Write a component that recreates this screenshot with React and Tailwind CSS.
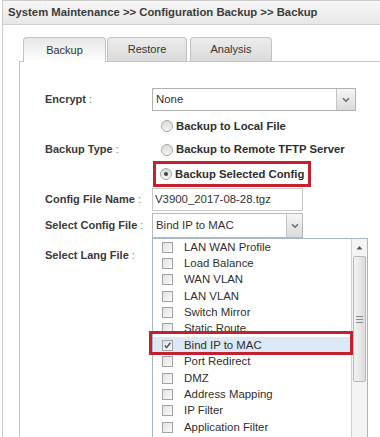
const langItems = [
  'LAN WAN Profile',
  'Load Balance',
  'WAN VLAN',
  'LAN VLAN',
  'Switch Mirror',
  'Static Route',
  'Bind IP to MAC',
  'Port Redirect',
  'DMZ',
  'Address Mapping',
  'IP Filter',
  'Application Filter',
]

function Chevron() {
  return (
    <svg width="8" height="6" viewBox="0 0 8 6">
      <path d="M1 1.2 L4 4.2 L7 1.2" fill="none" stroke="#6b6b6b" strokeWidth="1.6" />
    </svg>
  )
}

function DropButton({ w }) {
  return (
    <div className={`${w} h-full flex items-center justify-center border-l border-[#c4c4c4] bg-gradient-to-b from-[#f6f6f6] to-[#dadada]`}>
      <Chevron />
    </div>
  )
}

function Label({ name, className = '' }) {
  return (
    <div className={`w-[132px] pl-[25px] shrink-0 text-[11px] text-[#3a3a3a] ${className}`}>
      {name && (
        <>
          <span className="font-bold">{name}</span> <span className="text-[#777]">:</span>
        </>
      )}
    </div>
  )
}

function Radio({ checked }) {
  return (
    <span className="w-[12px] h-[12px] rounded-full border border-[#a8a8a8] bg-gradient-to-b from-[#d9d9d9] to-[#f7f7f7] flex items-center justify-center shrink-0">
      {checked && <span className="w-[4px] h-[4px] rounded-full bg-[#444]" />}
    </span>
  )
}

function Checkbox({ checked }) {
  return (
    <span className="w-[11px] h-[11px] border border-[#a2a2a2] bg-gradient-to-br from-[#e2e2e2] to-[#fafafa] flex items-center justify-center shrink-0">
      {checked && (
        <svg width="9" height="9" viewBox="0 0 9 9">
          <path d="M1.8 4.6 L3.6 6.6 L7.4 1.8" fill="none" stroke="#3d5283" strokeWidth="1.5" />
        </svg>
      )}
    </span>
  )
}

export default function App() {
  return (
    <div className="w-[380px] h-[437px] overflow-hidden bg-white font-['Liberation_Sans',Arial,sans-serif] text-[#333]">
      <div className="ml-[2px] w-[440px] h-[470px] border-l border-t border-[#cbcbcb]">
        <div className="h-[24px] pl-[5px] flex items-center bg-gradient-to-b from-[#f6f6f6] to-[#e7e7e7] border-b border-[#cfcfcf] text-[11.3px] font-bold text-[#3c3c3c]">
          System Maintenance &gt;&gt; Configuration Backup &gt;&gt; Backup
        </div>

        <div className="pt-[12px] pl-[16px]">
          {/* tabs */}
          <div className="flex items-start h-[24px] pl-[4px] text-[11px] text-[#333]">
            <div className="relative z-10 w-[83px] h-[25px] flex items-center justify-center border-x border-t border-[#c2c2c2] rounded-t-[4px] bg-gradient-to-b from-[#e6e6e6] to-white">
              Backup
            </div>
            <div className="ml-[1px] w-[80px] h-[24px] flex items-center justify-center border-x border-t border-[#c2c2c2] rounded-t-[4px] bg-gradient-to-b from-[#ececec] to-[#dadada]">
              Restore
            </div>
            <div className="ml-[3px] w-[82px] h-[24px] flex items-center justify-center border-x border-t border-[#c2c2c2] rounded-t-[4px] bg-gradient-to-b from-[#ececec] to-[#dadada]">
              Analysis
            </div>
          </div>

          <div className="border-l border-t border-[#c6c6c6] pt-[26px] h-[400px]">
            <div className="flex items-center h-[23px]">
              <Label name="Encrypt" />
              <div className="w-[204px] h-[23px] flex border border-[#b0b0b0] bg-white">
                <div className="flex-1 flex items-center px-[3px] text-[11.4px]">None</div>
                <DropButton w="w-[19px]" />
              </div>
            </div>

            <div className="flex items-center h-[24px] mt-[3px]">
              <Label />
              <div className="pl-[9px] flex items-center gap-[3px] whitespace-nowrap text-[11.3px] font-bold text-[#2e2e2e]">
                <Radio />
                Backup to Local File
              </div>
            </div>
            <div className="flex items-center h-[23px]">
              <Label name="Backup Type" />
              <div className="pl-[9px] flex items-center gap-[3px] whitespace-nowrap text-[11.3px] font-bold text-[#2e2e2e]">
                <Radio />
                Backup to Remote TFTP Server
              </div>
            </div>
            <div className="flex items-center h-[26px]">
              <Label />
              <div className="ml-[1px] w-[158px] h-[26px] border-[3px] border-[#c5202d] flex items-center pl-[4px] gap-[3px] whitespace-nowrap text-[11.3px] font-bold text-[#2e2e2e]">
                <Radio checked />
                <span className="whitespace-nowrap">Backup Selected Config</span>
              </div>
            </div>

            <div className="flex items-center h-[23px] mt-[1px]">
              <Label name="Config File Name" />
              <div className="w-[151px] h-[23px] border border-[#c8c8c8] flex items-center px-[2px] text-[11.4px]">
                V3900_2017-08-28.tgz
              </div>
            </div>

            <div className="flex items-center h-[25px] mt-[2px]">
              <Label name="Select Config File" />
              <div className="w-[151px] h-[25px] flex border border-[#b8b8b8]">
                <div className="flex-1 flex items-center px-[3px] text-[11.4px]">Bind IP to MAC</div>
                <DropButton w="w-[16px]" />
              </div>
            </div>

            <div className="flex items-start">
              <Label name="Select Lang File" className="pt-[9px]" />
              <div className="w-[216px] h-[230px] flex border border-[#a9b5c3] bg-white">
                <div className="flex-1 flex flex-col">
                  {langItems.map((item, i) => (
                    <div
                      key={item}
                      className={`relative h-[16.36px] shrink-0 flex items-center pl-[9px] gap-[11px] text-[11.4px] text-[#2f2f2f] ${i === 6 ? 'bg-[#dce8f5]' : ''}`}
                    >
                      <Checkbox checked={i === 6} />
                      {item}
                      {i === 6 && (
                        <div className="absolute left-[-4px] right-[-2px] top-[-6px] bottom-[-1px] border-[3px] border-[#c5202d]" />
                      )}
                    </div>
                  ))}
                </div>
                <div className="w-[16px] border-l border-[#cfcfcf] bg-[#f4f4f4] flex flex-col">
                  <div className="h-[16px] flex items-center justify-center">
                    <svg width="7" height="5" viewBox="0 0 7 5">
                      <path d="M0.5 4.5 L3.5 1 L6.5 4.5 Z" fill="#555" />
                    </svg>
                  </div>
                  <div className="mx-[1px] mt-[1px] h-[126px] border border-[#b9b9b9] rounded-[2px] bg-gradient-to-r from-[#f4f4f4] to-[#dcdcdc] flex flex-col items-center justify-center gap-[2px]">
                    <span className="w-[7px] h-px bg-[#8a8a8a]" />
                    <span className="w-[7px] h-px bg-[#8a8a8a]" />
                    <span className="w-[7px] h-px bg-[#8a8a8a]" />
                  </div>
                </div>
              </div>
            </div>
          </div>
        </div>
      </div>
    </div>
  )
}
